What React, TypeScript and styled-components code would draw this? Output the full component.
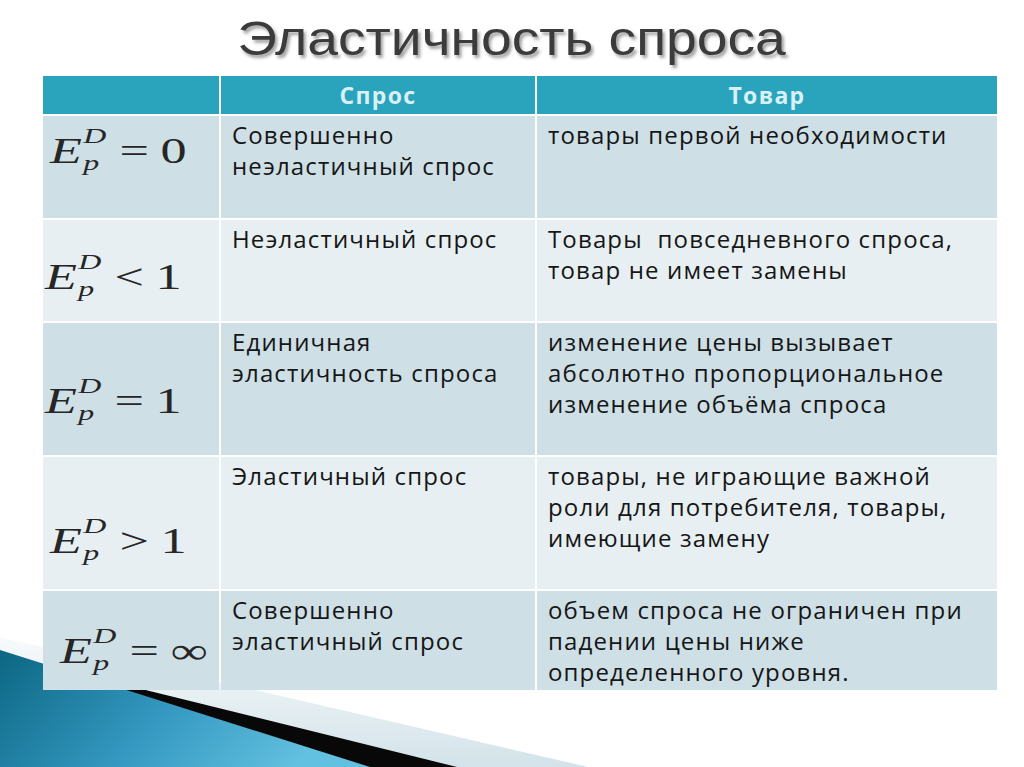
import React from 'react';
import styled, { createGlobalStyle } from 'styled-components';

const GlobalStyle = createGlobalStyle`
  html, body { margin: 0; padding: 0; background: #ffffff; }
  body {
    width: 1024px;
    height: 767px;
    overflow: hidden;
    font-family: "Open Sans", "DejaVu Sans", sans-serif;
  }
`;

const Slide = styled.div`
  position: relative;
  width: 1024px;
  height: 767px;
  overflow: hidden;
  background: #ffffff;
`;

const Decor = styled.svg`
  position: absolute;
  left: 0;
  top: 0;
  width: 1024px;
  height: 767px;
  z-index: 0;
`;

const Content = styled.div`
  position: relative;
  z-index: 1;
  display: flex;
  flex-direction: column;
  align-items: flex-start;
`;

const Title = styled.h1`
  margin: 0;
  align-self: stretch;
  box-sizing: border-box;
  height: 76px;
  padding-top: 14px;
  text-align: center;
  font-family: "Liberation Sans", "Open Sans", sans-serif;
  font-weight: normal;
  font-size: 48px;
  line-height: 50px;
  color: #3b3b3b;
  text-shadow: 2px 3px 3px rgba(0, 0, 0, 0.38);
`;

const TitleText = styled.span`
  display: inline-block;
  transform: scaleX(1.15);
  transform-origin: 50% 50%;
`;

const Table = styled.div`
  margin-left: 43px;
  width: 954px;
  display: grid;
  grid-template-columns: 176px 314px 460px;
  grid-template-rows: 38px 102px 101px 132px 132px 99px;
  gap: 2px;
`;

const HeadCell = styled.div`
  background: #2aa3bc;
  color: #d9f1f6;
  font-family: "Open Sans", sans-serif;
  font-weight: 700;
  font-size: 23px;
  letter-spacing: 1.3px;
  line-height: 38px;
  text-align: center;
`;

type Tone = 'dark' | 'light';

const toneColor = (t: Tone) => (t === 'dark' ? '#cedfe6' : '#e7eff2');

const Cell = styled.div<{ $tone: Tone }>`
  background: ${(p) => toneColor(p.$tone)};
  box-sizing: border-box;
  padding: 3px 6px 0 11px;
  font-family: "Open Sans", sans-serif;
  font-size: 24px;
  letter-spacing: 1.15px;
  line-height: 31px;
  color: #161616;
`;

const Line = styled.span`
  display: block;
  white-space: pre;
`;

const FormulaCell = styled.div<{ $tone: Tone; $top: number; $left: number }>`
  background: ${(p) => toneColor(p.$tone)};
  box-sizing: border-box;
  padding-top: ${(p) => p.$top}px;
  padding-left: ${(p) => p.$left}px;
  overflow: hidden;
`;

const Formula = styled.div`
  display: inline-block;
  white-space: nowrap;
  font-family: "Liberation Serif", "DejaVu Serif", serif;
  font-size: 36px;
  line-height: 40px;
  color: #262626;
  transform: scaleX(1.45);
  transform-origin: 0 0;
`;

const Var = styled.i`
  font-style: italic;
`;

const Scripts = styled.span`
  display: inline-flex;
  flex-direction: column;
  font-style: italic;
  font-size: 22px;
  line-height: 27px;
  vertical-align: 20px;
  margin-left: 1px;
`;

const Rel = styled.span`
  margin: 0 8px 0 9px;
`;

type Row = {
  tone: Tone;
  rel: string;
  rhs: string;
  top: number;
  left: number;
  demand: string[];
  goods: string[];
};

const rows: Row[] = [
  {
    tone: 'dark',
    rel: '=',
    rhs: '0',
    top: 6,
    left: 7,
    demand: ['Совершенно', 'неэластичный спрос'],
    goods: ['товары первой необходимости'],
  },
  {
    tone: 'light',
    rel: '<',
    rhs: '1',
    top: 28,
    left: 2,
    demand: ['Неэластичный спрос'],
    goods: ['Товары  повседневного спроса,', 'товар не имеет замены'],
  },
  {
    tone: 'dark',
    rel: '=',
    rhs: '1',
    top: 49,
    left: 2,
    demand: ['Единичная', 'эластичность спроса'],
    goods: ['изменение цены вызывает', 'абсолютно пропорциональное', 'изменение объёма спроса'],
  },
  {
    tone: 'light',
    rel: '>',
    rhs: '1',
    top: 55,
    left: 7,
    demand: ['Эластичный спрос'],
    goods: ['товары, не играющие важной', 'роли для потребителя, товары,', 'имеющие замену'],
  },
  {
    tone: 'dark',
    rel: '=',
    rhs: '∞',
    top: 31,
    left: 17,
    demand: ['Совершенно', 'эластичный спрос'],
    goods: ['объем спроса не ограничен при', 'падении цены ниже', 'определенного уровня.'],
  },
];

const Decoration: React.FC = () => (
  <Decor viewBox="0 0 1024 767" aria-hidden="true">
    <defs>
      <linearGradient id="lightStrip" x1="0" y1="0" x2="0" y2="1">
        <stop offset="0" stopColor="#f7fafb" />
        <stop offset="1" stopColor="#d3e3e9" />
      </linearGradient>
      <linearGradient id="teal" x1="0" y1="0" x2="1" y2="0.3">
        <stop offset="0" stopColor="#0c6683" />
        <stop offset="0.55" stopColor="#3498c0" />
        <stop offset="1" stopColor="#62c0e0" />
      </linearGradient>
    </defs>
    <polygon points="0,638 0,767 588,767 255,690" fill="url(#lightStrip)" />
    <polygon points="0,662 105,680 457,767 0,767" fill="#080808" />
    <polygon points="0,650 370,767 0,767" fill="url(#teal)" />
  </Decor>
);

export default function App() {
  return (
    <Slide>
      <GlobalStyle />
      <Decoration />
      <Content>
        <Title>
          <TitleText>Эластичность спроса</TitleText>
        </Title>
        <Table>
          <HeadCell />
          <HeadCell>Спрос</HeadCell>
          <HeadCell>Товар</HeadCell>
          {rows.map((r, i) => (
            <React.Fragment key={i}>
              <FormulaCell $tone={r.tone} $top={r.top} $left={r.left}>
                <Formula>
                  <Var>E</Var>
                  <Scripts>
                    <span>D</span>
                    <span>p</span>
                  </Scripts>
                  <Rel>{r.rel}</Rel>
                  <span>{r.rhs}</span>
                </Formula>
              </FormulaCell>
              <Cell $tone={r.tone}>
                {r.demand.map((l, j) => (
                  <Line key={j}>{l}</Line>
                ))}
              </Cell>
              <Cell $tone={r.tone}>
                {r.goods.map((l, j) => (
                  <Line key={j}>{l}</Line>
                ))}
              </Cell>
            </React.Fragment>
          ))}
        </Table>
      </Content>
    </Slide>
  );
}
